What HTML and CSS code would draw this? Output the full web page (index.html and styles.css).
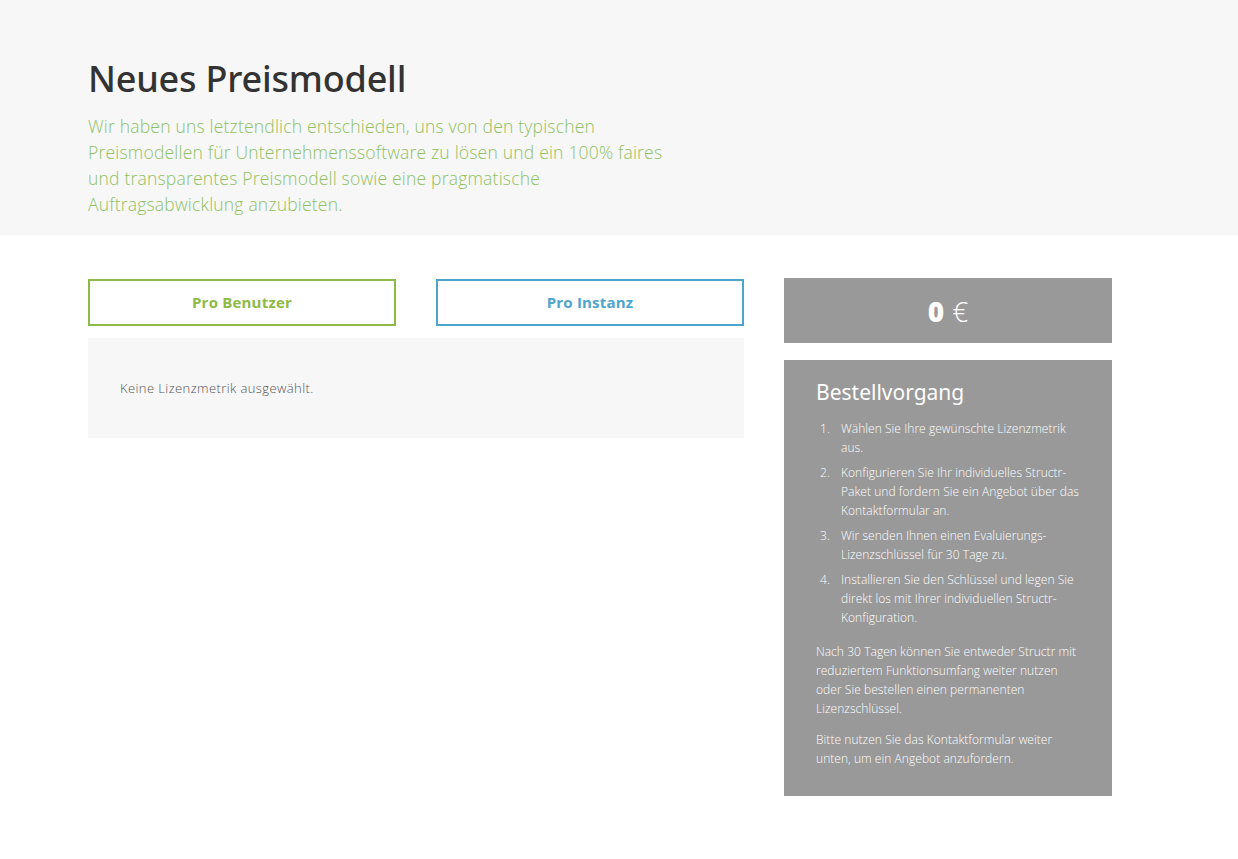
FILE: index.html
```html
<!DOCTYPE html>
<html lang="de">
<head>
<meta charset="utf-8">
<title>Neues Preismodell</title>
<link rel="stylesheet" href="styles.css">
</head>
<body>
  <!-- Kopfbereich -->
  <section class="intro">
    <div class="wrap">
      <h1>Neues Preismodell</h1>
      <p class="lead">Wir haben uns letztendlich entschieden, uns von den typischen Preismodellen für Unternehmenssoftware zu lösen und ein 100% faires und transparentes Preismodell sowie eine pragmatische Auftragsabwicklung anzubieten.</p>
    </div>
  </section>

  <section class="pricing">
    <div class="wrap cols">
      <div class="main">
        <div class="tabs">
          <button class="tab tab-user">Pro Benutzer</button>
          <button class="tab tab-instance">Pro Instanz</button>
        </div>
        <div class="config">
          <p>Keine Lizenzmetrik ausgewählt.</p>
        </div>
      </div>

      <aside class="side">
        <div class="price"><b>0</b> €</div>
        <div class="order">
          <h2>Bestellvorgang</h2>
          <ol>
            <li>Wählen Sie Ihre gewünschte Lizenzmetrik aus.</li>
            <li>Konfigurieren Sie Ihr individuelles Structr-Paket und fordern Sie ein Angebot über das Kontaktformular an.</li>
            <li>Wir senden Ihnen einen Evaluierungs-Lizenzschlüssel für 30 Tage zu.</li>
            <li>Installieren Sie den Schlüssel und legen Sie direkt los mit Ihrer individuellen Structr-Konfiguration.</li>
          </ol>
          <p>Nach 30 Tagen können Sie entweder Structr mit reduziertem Funktionsumfang weiter nutzen oder Sie bestellen einen permanenten Lizenzschlüssel.</p>
          <p>Bitte nutzen Sie das Kontaktformular weiter unten, um ein Angebot anzufordern.</p>
        </div>
      </aside>
    </div>
  </section>
</body>
</html>
```

FILE: styles.css
```css
/* Grundlayout */
body {
  margin: 0;
  font-family: "Open Sans", "Liberation Sans", sans-serif;
  color: #555;
  background: #fff;
}
.wrap { width: 1024px; margin-left: 88px; }

/* Kopfbereich */
.intro { background: #f7f7f7; padding: 54px 0 18px; }
.intro h1 {
  margin: 0 0 10px;
  font-family: "Noto Sans", "Open Sans", sans-serif;
  font-size: 36px; font-weight: 500; color: #333;
  letter-spacing: -0.2px;
}
.lead {
  margin: 0; width: 580px;
  font-size: 17.5px; line-height: 26px; font-weight: 300;
  letter-spacing: 0.2px;
  color: #8fc163;
}

/* Preisbereich */
.pricing { padding-top: 43px; }
.cols { display: flex; gap: 40px; }
.main { width: 656px; }
.side { width: 328px; }

.tabs { display: flex; gap: 40px; margin-top: 1px; }
.tab {
  flex: 1; height: 47px; padding-bottom: 3px;
  background: #fff; border: 2px solid;
  font-family: "Open Sans", sans-serif; font-size: 15px; font-weight: 700;
  letter-spacing: 0.2px;
  cursor: pointer;
}
.tab-user { border-color: #8dba46; color: #8dba46; }
.tab-instance { border-color: #4ea5cb; color: #4ea5cb; }

.config { background: #f7f7f7; margin-top: 12px; height: 100px; padding: 0 32px; box-sizing: border-box; }
.config p { margin: 0; padding-top: 41px; font-size: 13px; font-weight: 300; letter-spacing: 0.4px; color: #555; }

.price {
  background: #999; height: 65px;
  display: flex; align-items: center; justify-content: center;
  color: #fff; font-size: 28px; font-weight: 300;
}
.price b { font-weight: 800; margin-right: 8px; }

.order { background: #999; margin-top: 17px; padding: 18px 32px 28px; color: #fff; }
.order h2 {
  margin: 0 0 13px;
  font-family: "Noto Sans", "Open Sans", sans-serif;
  font-size: 21px; font-weight: 400;
}
.order ol { margin: 0 0 15px; padding-left: 4px; list-style: none; counter-reset: step; }
.order li {
  display: grid; grid-template-columns: 21px 1fr;
  font-size: 12px; line-height: 19px; font-weight: 300; letter-spacing: 0.05px;
  margin-bottom: 6px;
  counter-increment: step;
}
.order li::before { content: counter(step) "."; }
.order li:last-child { margin-bottom: 0; }
.order p { margin: 0 0 12px; font-size: 12px; line-height: 19px; font-weight: 300; letter-spacing: 0.05px; }
.order p:last-child { margin-bottom: 0; }
```
